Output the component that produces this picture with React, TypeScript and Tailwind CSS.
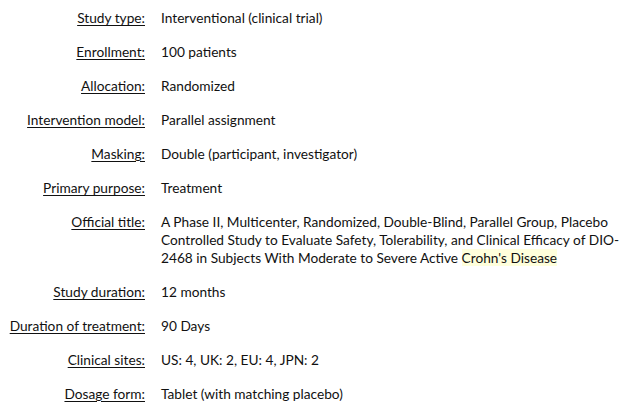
import React from 'react';

interface Row {
  label: string;
  value: React.ReactNode;
}

const rows: Row[] = [
  { label: 'Study type:', value: 'Interventional (clinical trial)' },
  { label: 'Enrollment:', value: '100 patients' },
  { label: 'Allocation:', value: 'Randomized' },
  { label: 'Intervention model:', value: 'Parallel assignment' },
  { label: 'Masking:', value: 'Double (participant, investigator)' },
  { label: 'Primary purpose:', value: 'Treatment' },
  {
    label: 'Official title:',
    value: (
      <>
        <span className="block whitespace-nowrap">
          A Phase II, Multicenter, Randomized, Double-Blind, Parallel Group, Placebo
        </span>
        <span className="block whitespace-nowrap">
          Controlled Study to Evaluate Safety, Tolerability, and Clinical Efficacy of DIO-
        </span>
        <span className="block whitespace-nowrap">
          2468 in Subjects With Moderate to Severe Active{' '}
          <span className="bg-[#ffffdc]">Crohn's Disease</span>
        </span>
      </>
    ),
  },
  { label: 'Study duration:', value: '12 months' },
  { label: 'Duration of treatment:', value: '90 Days' },
  { label: 'Clinical sites:', value: 'US: 4, UK: 2, EU: 4, JPN: 2' },
  { label: 'Dosage form:', value: 'Tablet (with matching placebo)' },
];

const App = () => {
  return (
    <div className="w-[626px] h-[414px] bg-white pt-[9px] font-['Lato',sans-serif] text-[13.7px] leading-[18px] text-[#111]">
      <div className="grid grid-cols-[145px_1fr] gap-x-4 gap-y-4">
        {rows.map((row) => (
          <React.Fragment key={row.label}>
            <div className="text-right whitespace-nowrap">
              <span className="underline underline-offset-2">{row.label}</span>
            </div>
            <div>{row.value}</div>
          </React.Fragment>
        ))}
      </div>
    </div>
  );
};

export default App;
